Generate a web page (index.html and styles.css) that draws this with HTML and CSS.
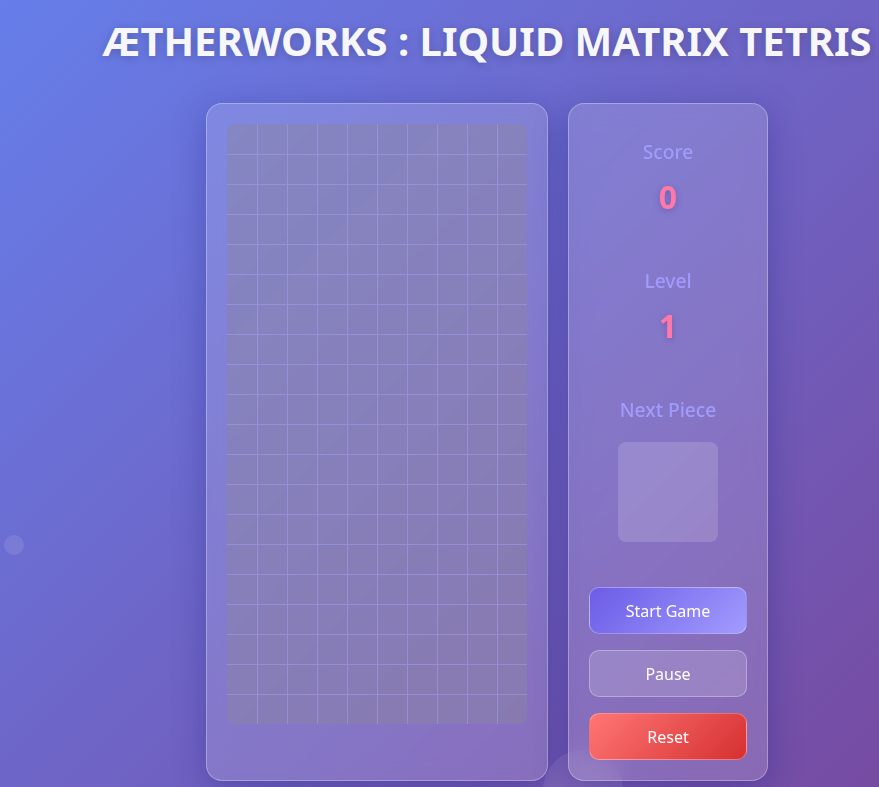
FILE: index.html
```html
<!DOCTYPE html>
<html lang="en">
<head>
<meta charset="utf-8">
<title>Ætherworks : Liquid Matrix Tetris</title>
<link rel="stylesheet" href="styles.css">
</head>
<body>
<span class="bubble bubble-small"></span>
<span class="bubble bubble-large"></span>
<div class="app">
  <h1 class="title">ÆTHERWORKS : LIQUID MATRIX TETRIS</h1>
  <div class="game">
    <section class="panel board-panel">
      <div class="board">
        <i></i><i></i><i></i><i></i><i></i><i></i><i></i><i></i><i></i><i></i>
        <i></i><i></i><i></i><i></i><i></i><i></i><i></i><i></i><i></i><i></i>
        <i></i><i></i><i></i><i></i><i></i><i></i><i></i><i></i><i></i><i></i>
        <i></i><i></i><i></i><i></i><i></i><i></i><i></i><i></i><i></i><i></i>
        <i></i><i></i><i></i><i></i><i></i><i></i><i></i><i></i><i></i><i></i>
        <i></i><i></i><i></i><i></i><i></i><i></i><i></i><i></i><i></i><i></i>
        <i></i><i></i><i></i><i></i><i></i><i></i><i></i><i></i><i></i><i></i>
        <i></i><i></i><i></i><i></i><i></i><i></i><i></i><i></i><i></i><i></i>
        <i></i><i></i><i></i><i></i><i></i><i></i><i></i><i></i><i></i><i></i>
        <i></i><i></i><i></i><i></i><i></i><i></i><i></i><i></i><i></i><i></i>
        <i></i><i></i><i></i><i></i><i></i><i></i><i></i><i></i><i></i><i></i>
        <i></i><i></i><i></i><i></i><i></i><i></i><i></i><i></i><i></i><i></i>
        <i></i><i></i><i></i><i></i><i></i><i></i><i></i><i></i><i></i><i></i>
        <i></i><i></i><i></i><i></i><i></i><i></i><i></i><i></i><i></i><i></i>
        <i></i><i></i><i></i><i></i><i></i><i></i><i></i><i></i><i></i><i></i>
        <i></i><i></i><i></i><i></i><i></i><i></i><i></i><i></i><i></i><i></i>
        <i></i><i></i><i></i><i></i><i></i><i></i><i></i><i></i><i></i><i></i>
        <i></i><i></i><i></i><i></i><i></i><i></i><i></i><i></i><i></i><i></i>
        <i></i><i></i><i></i><i></i><i></i><i></i><i></i><i></i><i></i><i></i>
        <i></i><i></i><i></i><i></i><i></i><i></i><i></i><i></i><i></i><i></i>
      </div>
    </section>
    <aside class="panel side-panel">
      <div class="stat">
        <h3 class="stat-label">Score</h3>
        <div class="stat-value">0</div>
      </div>
      <div class="stat">
        <h3 class="stat-label">Level</h3>
        <div class="stat-value">1</div>
      </div>
      <div class="stat stat-next">
        <h3 class="stat-label">Next Piece</h3>
        <div class="next-box"></div>
      </div>
      <div class="controls">
        <button class="btn btn-start">Start Game</button>
        <button class="btn btn-pause">Pause</button>
        <button class="btn btn-reset">Reset</button>
      </div>
    </aside>
  </div>
</div>
</body>
</html>
```
FILE: styles.css
```css
* { box-sizing: border-box; }

html, body {
  margin: 0;
  padding: 0;
  height: 100%;
  overflow: hidden;
}

body {
  font-family: "Noto Sans", "Open Sans", sans-serif;
  background: linear-gradient(135deg, #667eea 0%, #764ba2 100%);
  color: #fff;
  position: relative;
}

.bubble {
  position: absolute;
  border-radius: 50%;
  background: rgba(255, 255, 255, 0.1);
}
.bubble-small { left: 4px; top: 535px; width: 20px; height: 20px; }
.bubble-large { left: 543px; top: 750px; width: 80px; height: 80px; }

.app {
  width: 974px;
  padding-top: 13px;
  display: flex;
  flex-direction: column;
  align-items: center;
}

.title {
  margin: 0 0 35px;
  font-size: 40px;
  font-weight: 700;
  line-height: 55px;
  color: #f6f6fb;
  text-shadow: 0 2px 10px rgba(0, 0, 0, 0.2);
  white-space: nowrap;
}

.game {
  display: flex;
  gap: 20px;
  align-items: stretch;
}

.panel {
  background: rgba(255, 255, 255, 0.15);
  border: 1px solid rgba(255, 255, 255, 0.3);
  border-radius: 16px;
  box-shadow: 0 8px 32px rgba(31, 38, 135, 0.37);
  backdrop-filter: blur(10px);
  padding: 20px;
}

.board {
  width: 300px;
  height: 600px;
  border-radius: 8px;
  overflow: hidden;
  background: rgba(140, 132, 160, 0.45);
  display: grid;
  grid-template-columns: repeat(10, 30px);
  grid-template-rows: repeat(20, 30px);
}

.board i {
  display: block;
  border-left: 1px solid rgba(170, 162, 250, 0.45);
  border-top: 1px solid rgba(170, 162, 250, 0.45);
}
.board i:nth-child(10n+1) { border-left: none; }
.board i:nth-child(-n+10) { border-top: none; }

.side-panel {
  width: 200px;
  display: flex;
  flex-direction: column;
  align-items: stretch;
  text-align: center;
}

.stat {
  padding: 15px 0;
  margin-bottom: 19px;
}
.stat-next {
  padding-bottom: 0;
  margin-bottom: 45px;
}

.stat-label {
  margin: 0 0 10px;
  font-size: 19.2px;
  line-height: 26px;
  font-weight: 500;
  color: #a29bfe;
}
.stat-next .stat-label { margin-bottom: 19px; }

.stat-value {
  font-size: 32px;
  line-height: 44px;
  font-weight: 700;
  color: #fd79a8;
  text-shadow: 0 2px 6px rgba(80, 40, 140, 0.35);
}

.next-box {
  width: 100px;
  height: 100px;
  margin: 0 auto;
  border-radius: 8px;
  background: rgba(255, 255, 255, 0.15);
}

.controls {
  display: flex;
  flex-direction: column;
  gap: 16px;
}

.btn {
  font-family: inherit;
  font-size: 16px;
  line-height: 21px;
  padding: 13px 0 11px;
  color: #fff;
  border: 1px solid rgba(255, 255, 255, 0.3);
  border-radius: 10px;
  cursor: pointer;
}
.btn-start { background: linear-gradient(135deg, #6c5ce7, #a29bfe); }
.btn-pause { background: rgba(255, 255, 255, 0.15); }
.btn-reset { background: linear-gradient(135deg, #ff7675, #d63031); }
```
